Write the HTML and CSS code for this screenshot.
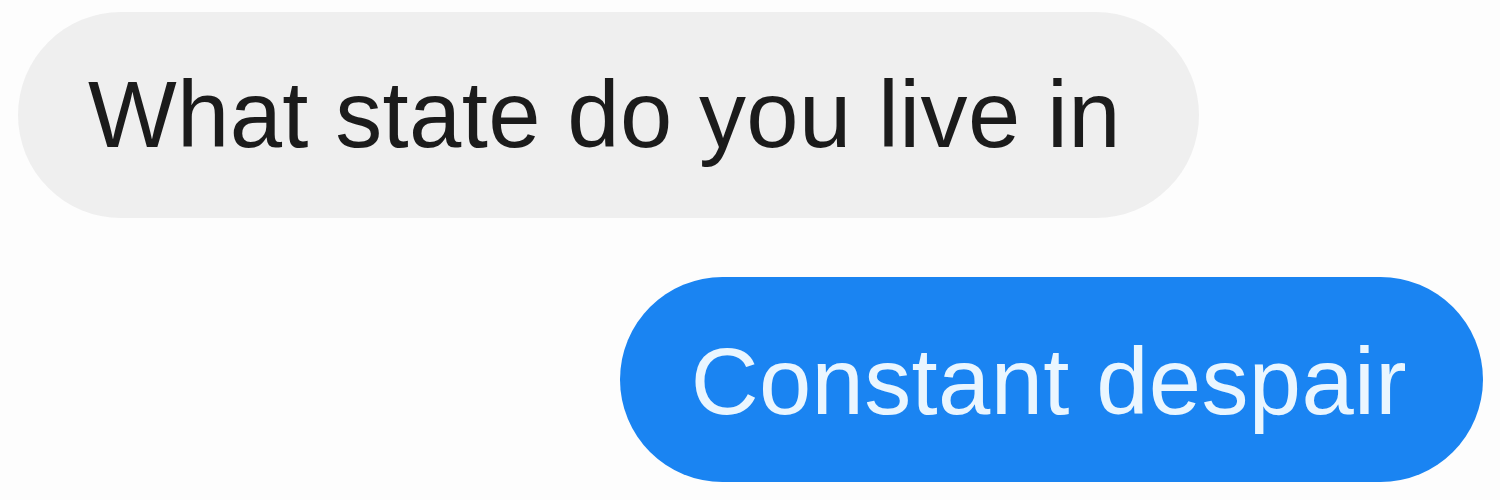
FILE: index.html
```html
<!DOCTYPE html>
<html lang="en">
<head>
    <meta charset="UTF-8">
    <meta name="viewport" content="width=device-width, initial-scale=1.0">
    <title>Messages</title>
    <link rel="stylesheet" href="styles.css">
</head>
<body>
    <div class="thread">
        <div class="bubble received">What state do you live in</div>
        <div class="bubble sent">Constant despair</div>
    </div>
</body>
</html>
```

FILE: styles.css
```css
body {
    margin: 0;
    background: #fdfdfd;
    font-family: "Liberation Sans", Arial, sans-serif;
}

.thread {
    display: flex;
    flex-direction: column;
    gap: 59px;
    padding: 12px 17px 0 18px;
}

.bubble {
    font-size: 94px;
    letter-spacing: 0.35px;
    height: 206px;
    line-height: 206px;
    border-radius: 103px;
    white-space: nowrap;
}

.received {
    align-self: flex-start;
    background: #efefef;
    color: #1b1b1b;
    padding: 0 78px 0 70px;
}

.sent {
    align-self: flex-end;
    background: #1a84f2;
    color: #eaf6ff;
    height: 205px;
    line-height: 205px;
    padding: 2px 76px 0 71px;
    box-sizing: border-box;
}
```
